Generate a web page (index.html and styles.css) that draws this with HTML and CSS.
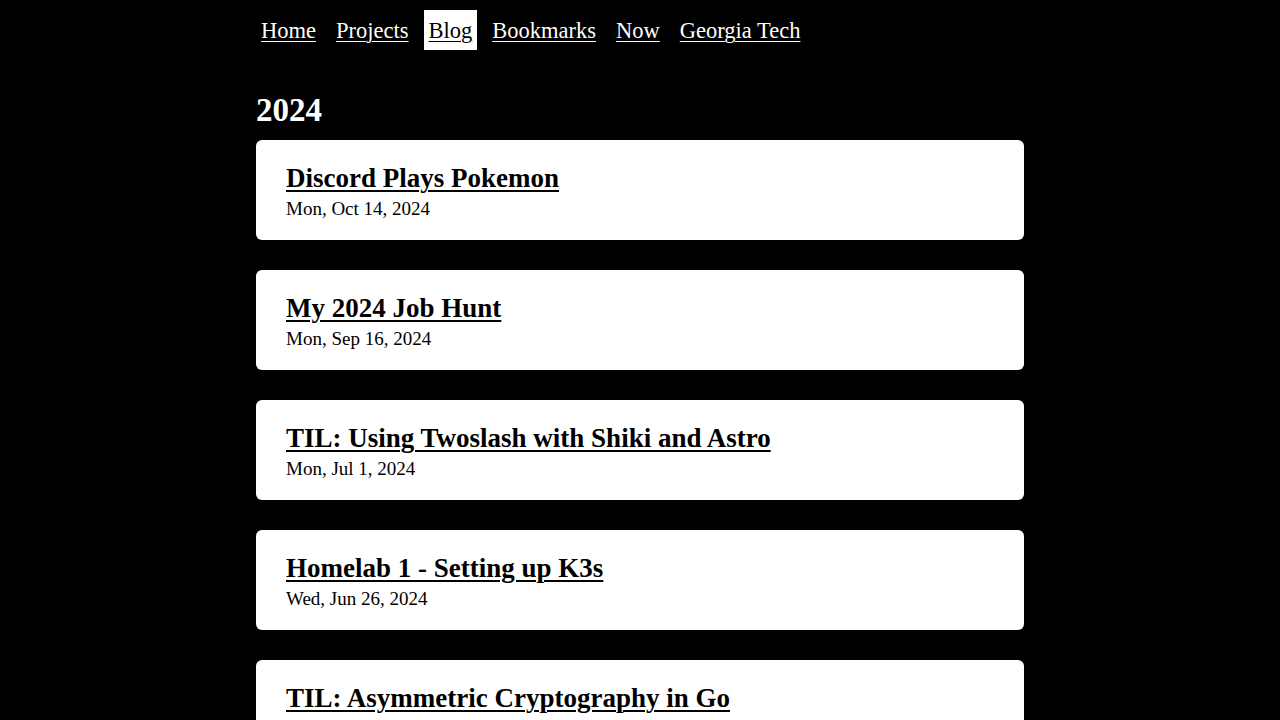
FILE: index.html
```html
<!DOCTYPE html>
<html lang="en">
<head>
<meta charset="utf-8">
<title>Blog</title>
<link rel="stylesheet" href="styles.css">
</head>
<body>
<div class="page">
  <nav class="nav">
    <a class="nav-link" href="#">Home</a>
    <a class="nav-link" href="#">Projects</a>
    <a class="nav-link active" href="#">Blog</a>
    <a class="nav-link" href="#">Bookmarks</a>
    <a class="nav-link" href="#">Now</a>
    <a class="nav-link" href="#">Georgia Tech</a>
  </nav>
  <main>
    <h2 class="year">2024</h2>
    <ul class="posts">
      <li class="card"><a class="card-title" href="#">Discord Plays Pokemon</a><div class="card-date">Mon, Oct 14, 2024</div></li>
      <li class="card"><a class="card-title" href="#">My 2024 Job Hunt</a><div class="card-date">Mon, Sep 16, 2024</div></li>
      <li class="card"><a class="card-title" href="#">TIL: Using Twoslash with Shiki and Astro</a><div class="card-date">Mon, Jul 1, 2024</div></li>
      <li class="card"><a class="card-title" href="#">Homelab 1 - Setting up K3s</a><div class="card-date">Wed, Jun 26, 2024</div></li>
      <li class="card"><a class="card-title" href="#">TIL: Asymmetric Cryptography in Go</a><div class="card-date">Tue, Jun 18, 2024</div></li>
    </ul>
  </main>
</div>
</body>
</html>
```
FILE: styles.css
```css
html, body {
  margin: 0;
  padding: 0;
  background: #000;
  color: #fff;
  font-family: "Liberation Serif", "DejaVu Serif", serif;
}
.page {
  width: 768px;
  margin: 0 auto;
}
.nav {
  display: flex;
  gap: 10px;
  padding-top: 10px;
}
.nav-link {
  display: block;
  padding: 0 5px;
  height: 40px;
  line-height: 42px;
  font-size: 22.5px;
  color: #fff;
  text-decoration: underline;
  text-underline-offset: 3px;
  text-decoration-thickness: 1px;
}
.nav-link.active {
  background: #fff;
  color: #000;
}
.year {
  margin: 40px 0 0;
  font-size: 33px;
  line-height: 40px;
  font-weight: bold;
}
.posts {
  list-style: none;
  margin: 10px 0 0;
  padding: 0;
  display: flex;
  flex-direction: column;
  gap: 30px;
}
.card {
  box-sizing: border-box;
  height: 100px;
  padding: 22px 30px 0;
  background: #fff;
  color: #000;
  border-radius: 6px;
}
.card-title {
  display: block;
  width: fit-content;
  font-size: 27px;
  line-height: 33px;
  font-weight: bold;
  color: #000;
  text-decoration: underline;
  text-decoration-thickness: 2px;
  text-underline-offset: 3px;
}
.card-date {
  font-size: 19px;
  line-height: 27px;
}
```
